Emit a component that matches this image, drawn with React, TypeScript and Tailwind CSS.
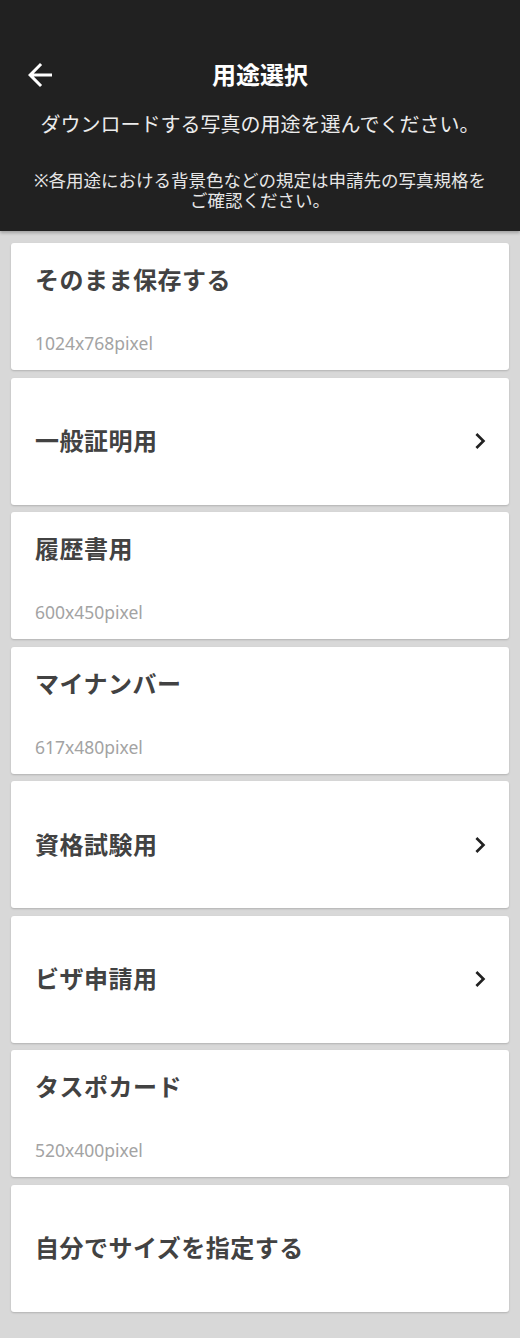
import React from "react";

type Purpose = {
  label: string;
  size?: string;
  more?: boolean;
};

const purposes: Purpose[] = [
  { label: "そのまま保存する", size: "1024x768pixel" },
  { label: "一般証明用", more: true },
  { label: "履歴書用", size: "600x450pixel" },
  { label: "マイナンバー", size: "617x480pixel" },
  { label: "資格試験用", more: true },
  { label: "ビザ申請用", more: true },
  { label: "タスポカード", size: "520x400pixel" },
  { label: "自分でサイズを指定する" },
];

const fontStack = "font-['Noto_Sans','Noto_Sans_CJK_JP',sans-serif]";

const BackIcon = () => (
  <svg width="36" height="36" viewBox="0 0 24 24" fill="white">
    <path d="M20 11H7.83l5.59-5.59L12 4l-8 8 8 8 1.41-1.41L7.83 13H20v-2z" />
  </svg>
);

const ChevronIcon = () => (
  <svg width="32" height="32" viewBox="0 0 24 24" fill="#212121">
    <path d="M10 6L8.59 7.41 13.17 12l-4.58 4.59L10 18l6-6z" />
  </svg>
);

const PurposeCard = ({ item }: { item: Purpose }) => (
  <button className="flex h-[127px] w-full items-center rounded-[3px] bg-white pl-[24px] pr-[13px] text-left shadow-[0_1px_2px_rgba(0,0,0,0.18)]">
    {item.size ? (
      <div className="flex h-full flex-col">
        <div className="mt-[21px] text-[24px] font-bold leading-[32px] tracking-[0.5px] text-[#424242]">
          {item.label}
        </div>
        <div className="mt-[35px] text-[17.5px] leading-[24px] text-[#a3a3a3]">
          {item.size}
        </div>
      </div>
    ) : (
      <div className="flex-1 text-[24px] font-bold leading-[32px] tracking-[0.5px] text-[#424242]">
        {item.label}
      </div>
    )}
    {item.more && <ChevronIcon />}
  </button>
);

export default function App() {
  return (
    <div className={`min-h-[1338px] w-[520px] bg-[#d8d8d8] ${fontStack}`}>
      <header className="flex h-[231px] flex-col items-center bg-[#212121] pt-[51px] text-white shadow-[0_2px_3px_rgba(0,0,0,0.25)]">
        <div className="relative flex h-[48px] w-full items-center justify-center">
          <button className="absolute left-[22px] top-[6px]" aria-label="戻る">
            <BackIcon />
          </button>
          <h1 className="text-[24px] font-bold leading-[32px]">用途選択</h1>
        </div>
        <p className="mt-[11px] text-[20px] leading-[30px] text-[#ececec]">
          ダウンロードする写真の用途を選んでください。
        </p>
        <div className="mt-[30px] flex flex-col items-center text-[17.5px] leading-[20px] text-[#e6e6e6]">
          <span>※各用途における背景色などの規定は申請先の写真規格を</span>
          <span>ご確認ください。</span>
        </div>
      </header>

      <main className="flex flex-col gap-[7.5px] px-[11px] pt-[12px] pb-[26px]">
        {purposes.map((item) => (
          <PurposeCard key={item.label} item={item} />
        ))}
      </main>
    </div>
  );
}
